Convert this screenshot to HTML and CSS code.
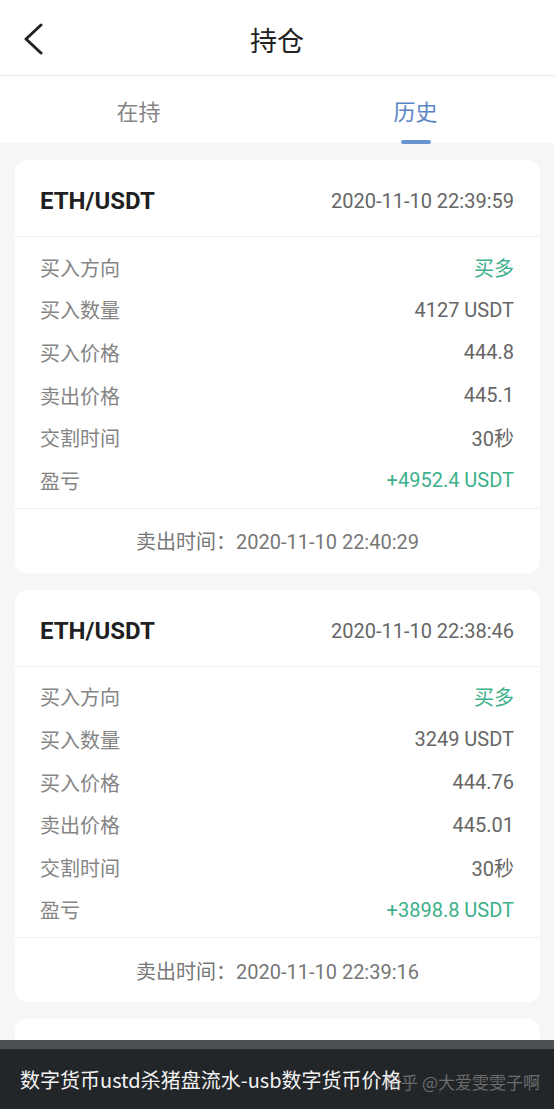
FILE: index.html
```html
<html>
<head>
<title>持仓</title>
<link rel="stylesheet" href="styles.css">
</head>
<body>

<div class="topbar">
  <svg class="back" width="24" height="32" viewBox="0 0 24 32">
    <path d="M19 2 L4 16 L19 30" fill="none" stroke="#222" stroke-width="3" stroke-linecap="round" stroke-linejoin="round"/>
  </svg>
  <div class="title">持仓</div>
</div>

<div class="tabs">
  <div class="tab">在持</div>
  <div class="tab tab-active">历史</div>
</div>

<div class="list">

  <div class="card">
    <div class="card-head">
      <span class="pair">ETH/USDT</span>
      <span class="date">2020-11-10 22:39:59</span>
    </div>
    <div class="rows">
      <div class="row"><span class="label">买入方向</span><span class="value green">买多</span></div>
      <div class="row"><span class="label">买入数量</span><span class="value">4127 USDT</span></div>
      <div class="row"><span class="label">买入价格</span><span class="value">444.8</span></div>
      <div class="row"><span class="label">卖出价格</span><span class="value">445.1</span></div>
      <div class="row"><span class="label">交割时间</span><span class="value">30秒</span></div>
      <div class="row"><span class="label">盈亏</span><span class="value green">+4952.4 USDT</span></div>
    </div>
    <div class="card-foot">卖出时间：2020-11-10 22:40:29</div>
  </div>

  <div class="card">
    <div class="card-head">
      <span class="pair">ETH/USDT</span>
      <span class="date">2020-11-10 22:38:46</span>
    </div>
    <div class="rows">
      <div class="row"><span class="label">买入方向</span><span class="value green">买多</span></div>
      <div class="row"><span class="label">买入数量</span><span class="value">3249 USDT</span></div>
      <div class="row"><span class="label">买入价格</span><span class="value">444.76</span></div>
      <div class="row"><span class="label">卖出价格</span><span class="value">445.01</span></div>
      <div class="row"><span class="label">交割时间</span><span class="value">30秒</span></div>
      <div class="row"><span class="label">盈亏</span><span class="value green">+3898.8 USDT</span></div>
    </div>
    <div class="card-foot">卖出时间：2020-11-10 22:39:16</div>
  </div>

  <div class="card">
    <div class="card-head">
      <span class="pair">ETH/USDT</span>
      <span class="date">2020-11-10 22:37:30</span>
    </div>
  </div>

</div>

<div class="caption">
  <span class="caption-text">数字货币ustd杀猪盘流水-usb数字货币价格</span>
  <span class="watermark">知乎 @大爱雯雯子啊</span>
</div>

</body>
</html>
```

FILE: styles.css
```css
body {
  margin: 0;
  height: 1109px;
  overflow: hidden;
  background-color: #f5f6f8;
  font-family: Roboto, "Noto Sans CJK SC", sans-serif;
  color: #222;
}

.topbar {
  height: 75px;
  background-color: #fff;
  border-bottom: 1px solid #e8e8ea;
  display: grid;
  grid-template-columns: 70px 1fr 70px;
  align-items: center;
}
.back {
  margin-left: 22px;
  margin-top: 2px;
}
.title {
  text-align: center;
  font-size: 27px;
  margin-top: 4px;
  color: #222;
}

.tabs {
  height: 67px;
  background-color: #fff;
  display: flex;
}
.tab {
  flex: 1;
  position: relative;
  display: flex;
  align-items: center;
  justify-content: center;
  font-size: 22px;
  color: #858585;
}
.tab-active {
  color: #5b86c6;
}
.tab-active::after {
  content: "";
  position: absolute;
  bottom: -1px;
  left: 50%;
  width: 30px;
  height: 4px;
  margin-left: -15px;
  border-radius: 2px;
  background-color: #6b93d0;
}

.list {
  padding: 17px 14px 0 15px;
  display: flex;
  flex-direction: column;
  gap: 17px;
}

.card {
  background-color: #fff;
  border-radius: 12px;
}
.card-head {
  height: 77px;
  padding: 6px 26px 0 25px;
  box-sizing: border-box;
  border-bottom: 1px solid #efeff1;
  display: flex;
  align-items: center;
  justify-content: space-between;
}
.pair {
  font-size: 24px;
  font-weight: bold;
  color: #1f1f24;
}
.date {
  font-size: 20px;
  color: #666;
}

.rows {
  padding: 9px 26px 6px 25px;
  border-bottom: 1px solid #efeff1;
}
.row {
  height: 42.6px;
  display: flex;
  align-items: center;
  justify-content: space-between;
}
.label {
  font-size: 20px;
  color: #858585;
}
.value {
  font-size: 20px;
  color: #666;
}
.green {
  color: #3cb08a;
}

.card-foot {
  height: 64px;
  display: flex;
  align-items: center;
  justify-content: center;
  font-size: 20px;
  color: #777;
}

.caption {
  position: fixed;
  left: 0;
  right: 0;
  bottom: 0;
  height: 69px;
  box-sizing: border-box;
  border-top: 9px solid #4d5156;
  background-color: #232629;
  display: flex;
  align-items: center;
  padding-left: 20px;
}
.caption-text {
  font-family: "Noto Sans CJK SC", sans-serif;
  font-size: 20px;
  color: #f2f2f2;
}
.watermark {
  position: absolute;
  right: 14px;
  top: 20px;
  font-family: "Noto Sans CJK SC", sans-serif;
  font-size: 17px;
  color: rgba(200, 200, 200, 0.45);
}
```
